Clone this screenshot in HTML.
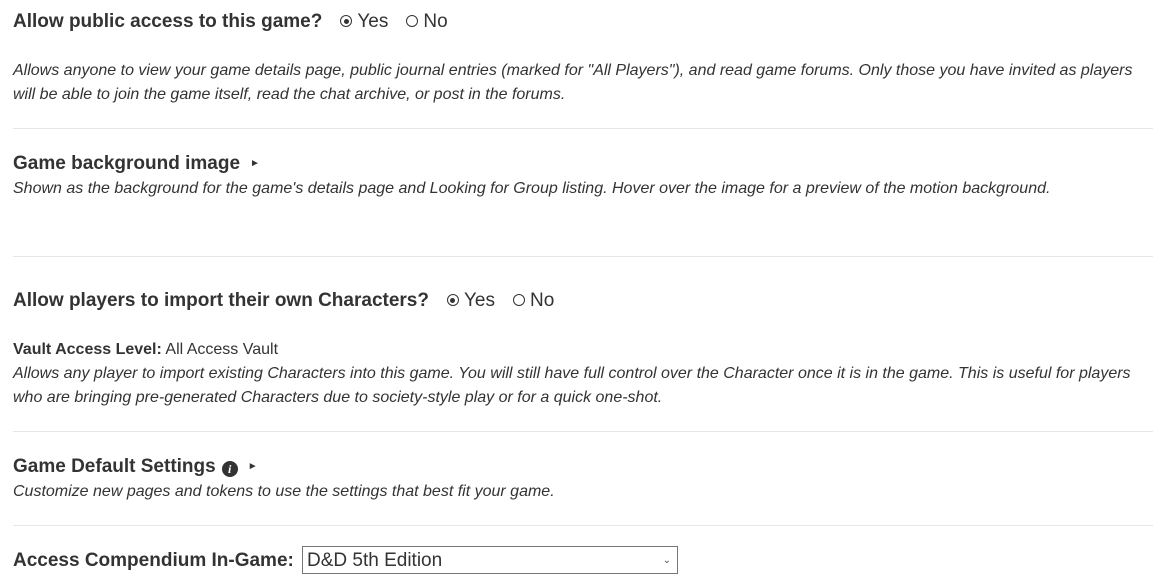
<!DOCTYPE html>
<html><head><style>
body{margin:0;width:1165px;height:582px;background:#fff;font-family:"Liberation Sans",Arial,sans-serif;color:#333;position:relative;overflow:hidden}
.a{position:absolute;left:13px;white-space:nowrap}
h{font-weight:bold;font-size:19px}
.d{font-style:italic;font-size:16px;line-height:24px;white-space:normal;width:1140px}
.hr{position:absolute;left:13px;width:1140px;height:1px;background:#e6e6e6}
.r{font-size:19px;font-weight:normal;margin-left:18px}
.rad{display:inline-block;width:12px;height:12px;border:1px solid #333;border-radius:50%;vertical-align:0;position:relative;margin-right:5px;box-sizing:border-box}
.rad.on::after{content:"";position:absolute;left:2.5px;top:2.5px;width:5px;height:5px;border-radius:50%;background:#333}
.tri{font-size:10px;margin-left:10px;vertical-align:3px}
.info{display:inline-block;width:16px;height:16px;border-radius:50%;background:#333;color:#fff;font-size:12px;font-style:italic;font-family:"Liberation Serif",serif;text-align:center;line-height:16px;vertical-align:-1px;margin-left:6px;font-weight:bold}
</style></head><body>
<div class="a" style="top:11px"><h>Allow public access to this game?</h><span class="r"><span class="rad on"></span>Yes</span><span class="r"><span class="rad"></span>No</span></div>
<div class="a d" style="top:59px">Allows anyone to view your game details page, public journal entries (marked for "All Players"), and read game forums. Only those you have invited as players will be able to join the game itself, read the chat archive, or post in the forums.</div>
<div class="hr" style="top:128px"></div>
<div class="a" style="top:153px"><h>Game background image</h><span class="tri">►</span></div>
<div class="a d" style="top:177px">Shown as the background for the game's details page and Looking for Group listing. Hover over the image for a preview of the motion background.</div>
<div class="hr" style="top:256px"></div>
<div class="a" style="top:290px"><h>Allow players to import their own Characters?</h><span class="r"><span class="rad on"></span>Yes</span><span class="r"><span class="rad"></span>No</span></div>
<div class="a" style="top:341px;font-size:16px"><b>Vault Access Level:</b> All Access Vault</div>
<div class="a d" style="top:362px">Allows any player to import existing Characters into this game. You will still have full control over the Character once it is in the game. This is useful for players who are bringing pre-generated Characters due to society-style play or for a quick one-shot.</div>
<div class="hr" style="top:431px"></div>
<div class="a" style="top:456px"><h>Game Default Settings</h><span class="info">i</span><span class="tri">►</span></div>
<div class="a d" style="top:480px">Customize new pages and tokens to use the settings that best fit your game.</div>
<div class="hr" style="top:525px"></div>
<div class="a" style="top:550px"><h>Access Compendium In-Game:</h></div>
<div style="position:absolute;left:302px;top:546px;width:376px;height:28px;border:1px solid #767676;box-sizing:border-box;font-size:19px;line-height:27px;padding-left:4px">D&amp;D 5th Edition<span style="position:absolute;right:6px;top:0;font-size:10px;color:#555">&#8964;</span></div>
</body></html>
